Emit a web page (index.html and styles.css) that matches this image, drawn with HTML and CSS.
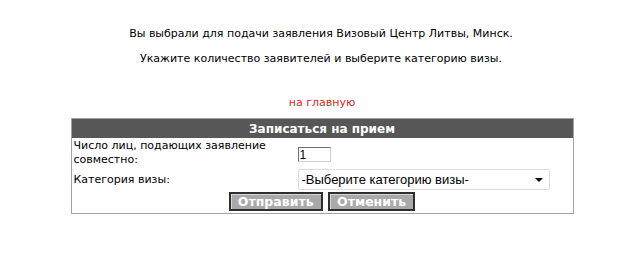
FILE: index.html
```html
<!DOCTYPE html>
<html lang="ru">
<head>
  <meta charset="UTF-8">
  <title>Запись на прием</title>
  <link rel="stylesheet" href="styles.css">
</head>
<body>
  <div class="page">
    <p class="intro">Вы выбрали для подачи заявления Визовый Центр Литвы, Минск.</p>
    <p class="intro second">Укажите количество заявителей и выберите категорию визы.</p>

    <a class="home" href="#">на главную</a>

    <table class="form-table">
      <tr>
        <th colspan="2">Записаться на прием</th>
      </tr>
      <tr>
        <td class="label">Число лиц, подающих заявление совместно:</td>
        <td><input type="text" class="count" value="1"></td>
      </tr>
      <tr>
        <td class="label">Категория визы:</td>
        <td>
          <span class="select-wrap">
            <select class="category">
              <option>-Выберите категорию визы-</option>
            </select>
          </span>
        </td>
      </tr>
      <tr>
        <td colspan="2" class="actions">
          <button type="button">Отправить</button>
          <button type="button">Отменить</button>
        </td>
      </tr>
    </table>
  </div>
</body>
</html>
```

FILE: styles.css
```css
body {
  margin: 0;
  background: #fff;
  font-family: "DejaVu Sans", Verdana, sans-serif;
  font-size: 11px;
  color: #000;
}
.page {
  padding-top: 27px;
  text-align: center;
}
.intro {
  margin: 0;
  line-height: 13px;
  padding-left: 2px;
}
.intro.second {
  margin-top: 12px;
}
.home {
  display: block;
  margin-top: 31px;
  line-height: 13px;
  color: #c3322b;
  text-decoration: none;
  padding-left: 4px;
}
.form-table {
  width: 503px;
  margin: 9px auto 0;
  border: 1px solid #a3a3a3;
  border-collapse: collapse;
  text-align: left;
  position: relative;
  left: 2px;
}
.form-table th {
  background: #575757;
  color: #fff;
  font-size: 12px;
  font-weight: bold;
  height: 19px;
  padding: 0;
  text-align: center;
}
.form-table td {
  padding: 1px 2px;
  vertical-align: middle;
}
.label {
  width: 220px;
  line-height: 14px;
  padding-right: 30px;
}
.count {
  width: 29px;
  height: 13px;
  padding: 0 1px;
  border: 1px solid #6e6e6e;
  border-right-color: #cfcfcf;
  border-bottom-color: #cfcfcf;
  font-family: "Liberation Sans", Arial, sans-serif;
  font-size: 12px;
  margin-top: 3px;
}
.select-wrap {
  display: inline-block;
  position: relative;
}
.select-wrap::after {
  content: "";
  position: absolute;
  right: 7px;
  top: 9px;
  border-left: 4px solid transparent;
  border-right: 4px solid transparent;
  border-top: 4px solid #000;
  pointer-events: none;
}
.category {
  appearance: none;
  -webkit-appearance: none;
  width: 252px;
  height: 21px;
  margin: 0;
  padding: 0 3px;
  border: 1px solid #dcdcdc;
  border-radius: 2px;
  background: #fff;
  font-family: "Liberation Sans", Arial, sans-serif;
  font-size: 13px;
  color: #000;
  vertical-align: middle;
}
.actions {
  text-align: center;
  padding: 1px 0 2px !important;
}
.actions button {
  background: #a9a9a9;
  color: #fff;
  font-family: "DejaVu Sans", Verdana, sans-serif;
  font-size: 12.5px;
  font-weight: bold;
  height: 19px;
  padding: 0 7px;
  border: 2px solid #2e2e2e;
  box-shadow: inset 1px 1px 0 #d8d8d8;
  margin: 0 1px;
  vertical-align: middle;
}
```
